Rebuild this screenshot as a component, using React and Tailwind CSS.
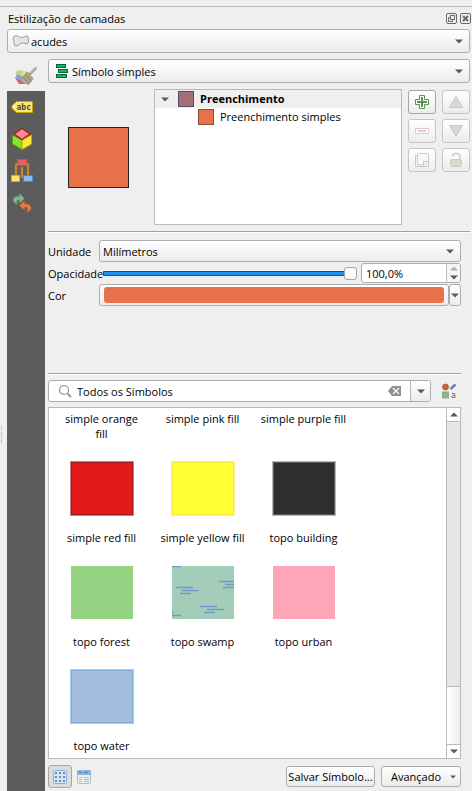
import React from "react";

const UI = "font-['Open_Sans','Noto_Sans',sans-serif]";
const FACE = "border border-[#adadad] rounded-[3px] bg-linear-to-b from-white to-[#ececec]";

function Caret({ up = false, className = "text-[#5a5a5a]" }) {
  return (
    <svg width="8" height="5" viewBox="0 0 8 5" className={`shrink-0 ${className}`} aria-hidden="true">
      <path d={up ? "M0 4.5 L4 0.5 L8 4.5Z" : "M0 0.5 H8 L4 4.5Z"} fill="currentColor" />
    </svg>
  );
}

function Combo({ label, value, icon, id, className, pad }) {
  return (
    <div className={`relative flex-1 min-w-0 ${className}`}>
      <select
        id={id}
        aria-label={label}
        className={`block w-full h-full appearance-none outline-none text-black ${pad} ${FACE}`}
      >
        <option>{value}</option>
      </select>
      <span className="absolute inset-y-0 left-[5px] flex items-center pointer-events-none">{icon}</span>
      <span className="absolute inset-y-0 right-[7px] flex items-center pointer-events-none">
        <Caret />
      </span>
    </div>
  );
}

function PolygonIcon() {
  return (
    <svg width="18" height="14" viewBox="0 0 18 14">
      <path
        d="M2.5 2 C5 0.5 7 3.5 9.5 3.5 C12 3.5 13.5 1.5 15.5 2 C17 4 16.5 8 16 9.5 C14 11 12.5 8.5 10 9 C7.5 9.5 6 12.5 3.5 12 C1.5 11.5 2.5 8.5 1.5 6.5 C1 5 1.5 3 2.5 2Z"
        fill="#e3e3e3"
        stroke="#9a9a9a"
      />
    </svg>
  );
}

function SingleSymbolIcon() {
  return (
    <svg width="16" height="16" viewBox="0 0 16 16">
      <g fill="#0db865" stroke="#07633a">
        <rect x="3.5" y="1.5" width="9" height="3" />
        <rect x="5.5" y="6.5" width="9" height="3" />
        <rect x="3.5" y="11.5" width="10" height="3" />
      </g>
    </svg>
  );
}

function BrushIcon() {
  return (
    <svg width="24" height="20" viewBox="0 0 24 20" className="shrink-0">
      <path d="M4 4 L10 5 L7 10 L1 8Z" fill="#c3d77c" />
      <path d="M10 5 L16 6 L13 11 L7 10Z" fill="#e6da90" />
      <path d="M3 8 L8 10 L6 14 L1 12Z" fill="#78a9e6" />
      <path d="M7 10 L13 11 L12 15 L6 14Z" fill="#8fc9bc" />
      <path d="M1 12 L7 14 L12 18 L5 18Z" fill="#d3607f" />
      <path d="M13 6 L19 12 C18 15 16 17 14 19 L6 12 C9 11 11 9 13 6Z" fill="#aaa58f" stroke="#8f8a76" strokeWidth="0.6" />
      <path d="M9 11.5 L15 17 M11 9.5 L17 14.5" stroke="#827e69" strokeWidth="0.8" />
      <path d="M15.5 8.5 L21.5 2.5" stroke="#a6a18d" strokeWidth="2.6" strokeLinecap="round" />
      <path d="M16 7.5 L21 2.5" stroke="#c8c4b2" strokeWidth="0.8" />
    </svg>
  );
}

function LabelIcon() {
  return (
    <svg width="22" height="12" viewBox="0 0 22 12" className="shrink-0">
      <path d="M5.5 0.5 H21.5 V11.5 H5.5 L1 7.5 V4.5Z" fill="#fbe870" stroke="#c9a300" />
      <circle cx="3.4" cy="6" r="1.1" fill="#fff" />
      <text x="5.5" y="9" fontSize="8" fontWeight="700" fontFamily="DejaVu Sans Mono" fill="#4b4632">abc</text>
    </svg>
  );
}

function CubeIcon() {
  return (
    <svg width="22" height="24" viewBox="0 0 22 24" className="shrink-0">
      <path d="M1.5 8 L11 13 V22.5 L1.5 17Z" fill="#83e62c" stroke="#4ea70c" />
      <path d="M20.5 8 L11 13 V22.5 L20.5 17Z" fill="#ffe73a" stroke="#c8a800" />
      <path d="M11 1.5 L19 7 L11 12.5 L3 7Z" fill="#f78d8d" stroke="#bc1420" strokeWidth="1.3" />
    </svg>
  );
}

function DiagramIcon() {
  return (
    <svg width="22" height="24" viewBox="0 0 22 24" className="shrink-0">
      <path d="M5 17 V5 H17 V17 M11 8 V19" fill="none" stroke="#a66e16" strokeWidth="2.6" />
      <path d="M5 17 V5 H17 V17 M11 8 V19" fill="none" stroke="#dda046" />
      <rect x="6.5" y="0.5" width="9" height="6" fill="#ee5f64" stroke="#cf4c51" />
      <rect x="0.5" y="16.5" width="8" height="6" fill="#fce565" stroke="#cdae29" />
      <rect x="12.5" y="16.5" width="9" height="6" fill="#8dbaf0" stroke="#5585bd" />
    </svg>
  );
}

function HistoryIcon() {
  return (
    <svg width="20" height="20" viewBox="0 0 20 20" className="shrink-0">
      <path d="M5.5 11.5 C-1 9 0 2.5 7.5 3.5 V0.5 L12.5 5.5 L7.5 10 V7 C4.5 6.5 4 8.5 5.5 11.5Z" fill="#7fb592" stroke="#66997a" strokeWidth="0.7" />
      <path d="M14 19.5 C21.5 17.5 20.5 10.5 12.5 11 V8 L7.5 12.5 L12.5 17 V14 C16 13.5 16.5 16.5 14 19.5Z" fill="#e37e43" stroke="#bd632e" strokeWidth="0.7" />
    </svg>
  );
}

function AddIcon() {
  return (
    <svg width="16" height="16" viewBox="0 0 16 16">
      <path d="M5.5 1.5 H10.5 V5.5 H14.5 V10.5 H10.5 V14.5 H5.5 V10.5 H1.5 V5.5 H5.5Z" fill="#fff" stroke="#5c9158" />
      <path d="M8 3 V13 M3 8 H13" stroke="#5c9158" strokeWidth="2" />
    </svg>
  );
}

function RemoveIcon() {
  return (
    <svg width="16" height="16" viewBox="0 0 16 16">
      <rect x="1.5" y="5.5" width="13" height="5" fill="#fff" stroke="#e3cdcb" />
      <rect x="4" y="7" width="8" height="2" fill="#e3cdcb" />
    </svg>
  );
}

function TriangleIcon({ down = false }) {
  return (
    <svg width="16" height="16" viewBox="0 0 16 16">
      <path d={down ? "M1.5 2.5 H14.5 L8 13.5Z" : "M1.5 13.5 H14.5 L8 2.5Z"} fill="#d6d8db" stroke="#c3c6ca" />
    </svg>
  );
}

function DuplicateIcon() {
  return (
    <svg width="16" height="16" viewBox="0 0 16 16">
      <path d="M3 3.5 H1.5 V14.5 H10" fill="none" stroke="#c9c9c9" />
      <path d="M3.5 1.5 H14.5 V12.5 H3.5Z" fill="#f8f8f8" stroke="#cfcfcf" />
      <rect x="9.5" y="9.5" width="5" height="5" fill="#eeede2" stroke="#cfcdbb" />
    </svg>
  );
}

function LockIcon() {
  return (
    <svg width="16" height="16" viewBox="0 0 16 16">
      <path d="M4.5 4.5 C5 0.5 12 0.5 12 5 V7" fill="none" stroke="#d6d6d6" strokeWidth="2" />
      <rect x="2.5" y="7.5" width="11" height="7" rx="1" fill="#dad8cb" stroke="#cfccbc" />
    </svg>
  );
}

function ToolButton({ label, disabled, children }) {
  return (
    <button
      type="button"
      aria-label={label}
      disabled={disabled}
      className={`w-7 h-6 flex items-center justify-center rounded-[3px] border bg-linear-to-b from-white to-[#ececec] ${
        disabled ? "border-[#c6c6c6]" : "border-[#a6a6a6]"
      }`}
    >
      {children}
    </button>
  );
}

function Divider() {
  return <div className="h-[2px] border-t border-[#a0a0a0] bg-white" />;
}

function Swamp() {
  return (
    <svg width="62" height="53" viewBox="0 0 62 53" className="m-px">
      <rect width="62" height="53" fill="#a4cdb9" />
      <path
        d="M0 .5 H9 M4 21.5 H21 M10 24.5 H27 M8 27.5 H19 M47 15.5 H62 M53 18.5 H62 M51 21.5 H62 M28 40.5 H45 M35 43.5 H52 M32 46.5 H43 M0 46.5 H2 M0 49.5 H9"
        stroke="#6d9bd0"
        strokeWidth="1.3"
      />
    </svg>
  );
}

const symbols = [
  { name: "simple red fill", swatch: "bg-[#e31a1c] border border-[#c28485] inset-ring inset-ring-[#a81a1c]" },
  { name: "simple yellow fill", swatch: "bg-[#ffff33] border border-[#fbf0a0] inset-ring inset-ring-[#fbea3c]" },
  { name: "topo building", swatch: "bg-[#2f2f2f] border border-[#b9b9b9] inset-ring inset-ring-[#5c5c5c]" },
  { name: "topo forest", swatch: "bg-[#95d282] border border-white" },
  { name: "topo swamp", art: <Swamp /> },
  { name: "topo urban", swatch: "bg-[#ffa5b8] border border-white" },
  { name: "topo water", swatch: "bg-[#a6bedd] border border-[#b0cbe8] inset-ring inset-ring-[#82add9]" },
];

export default function App() {
  return (
    <div className={`min-h-screen flex flex-col bg-[#efefef] pt-[6px] text-[11px] leading-[15px] text-black ${UI}`}>
      <div className="flex-1 flex border-t border-[#b9b9b9]">
        <div className="w-[7px] shrink-0 pt-[419px]">
          <div className="ml-px w-px h-[17px] border-l border-dotted border-[#a8a8a8]" />
        </div>
        <div className="flex-1 min-w-0 flex flex-col">
          <header className="h-[22px] flex items-center justify-between pl-px pr-px">
            <h1>Estilização de camadas</h1>
            <div className="flex gap-[3px]">
              <button type="button" aria-label="Destacar painel">
                <svg width="11" height="11" viewBox="0 0 11 11" fill="none" stroke="#6b6b6b">
                  <rect x=".5" y=".5" width="10" height="10" rx="1.5" />
                  <rect x="4.5" y="2.5" width="4" height="4" />
                  <path d="M4.5 4.5 H2.5 V8.5 H6.5 V6.5" />
                </svg>
              </button>
              <button type="button" aria-label="Fechar painel">
                <svg width="11" height="11" viewBox="0 0 11 11" fill="none" stroke="#6b6b6b">
                  <rect x=".5" y=".5" width="10" height="10" rx="1.5" />
                  <path d="M3 3 L8 8 M8 3 L3 8" strokeWidth="2" />
                </svg>
              </button>
            </div>
          </header>

          <div className="flex pr-[2px]">
            <Combo label="Camada" value="acudes" icon={<PolygonIcon />} className="h-6" pad="pl-[23px]" />
          </div>

          <div className="flex-1 flex">
            <nav className="w-[38px] shrink-0 flex flex-col">
              <button type="button" aria-label="Simbologia" className="h-[38px] pt-2 flex items-center justify-center">
                <BrushIcon />
              </button>
              <div className="flex-1 bg-[#5c5c5c] flex flex-col">
                <button type="button" aria-label="Rótulos" className="h-8 pr-2 flex items-center justify-center"><LabelIcon /></button>
                <button type="button" aria-label="Visualização 3D" className="h-8 pr-2 flex items-center justify-center"><CubeIcon /></button>
                <button type="button" aria-label="Diagramas" className="h-8 pr-2 flex items-center justify-center"><DiagramIcon /></button>
                <button type="button" aria-label="Histórico" className="h-8 pr-2 flex items-center justify-center"><HistoryIcon /></button>
              </div>
            </nav>

            <main className="flex-1 min-w-0 flex flex-col pl-[3px] pt-[6px]">
              <div className="pr-[2px]">
                <div className="flex">
                  <Combo label="Renderizador" value="Símbolo simples" icon={<SingleSymbolIcon />} className="h-6" pad="pl-[23px]" />
                </div>
                <div className="mt-[6px] flex">
                  <div className="w-[106px] shrink-0 flex items-center pl-5">
                    <div className="w-[61px] h-[61px] bg-[#e77148] border border-[#232323]" />
                  </div>
                  <ul className="flex-1 min-w-0 h-[136px] border border-[#b9b9b9] bg-white leading-[18px]">
                    <li>
                      <div className="h-[18px] flex items-center bg-[#efefef] pl-[6px] font-bold">
                        <Caret />
                        <span className="ml-[9px] mr-[6px] size-4 bg-[#a27074] border border-[#5a4a66]" />
                        Preenchimento
                      </div>
                      <ul>
                        <li className="h-[18px] flex items-center pl-[43px]">
                          <span className="mr-[6px] size-4 bg-[#e77148] border border-[#8a4a3c]" />
                          Preenchimento simples
                        </li>
                      </ul>
                    </li>
                  </ul>
                  <div className="ml-[6px] mt-px grid grid-cols-2 gap-x-[6px] gap-y-[5px] content-start">
                    <ToolButton label="Adicionar camada de símbolo"><AddIcon /></ToolButton>
                    <ToolButton label="Mover para cima" disabled><TriangleIcon /></ToolButton>
                    <ToolButton label="Remover camada de símbolo" disabled><RemoveIcon /></ToolButton>
                    <ToolButton label="Mover para baixo" disabled><TriangleIcon down /></ToolButton>
                    <ToolButton label="Duplicar" disabled><DuplicateIcon /></ToolButton>
                    <ToolButton label="Bloquear cor" disabled><LockIcon /></ToolButton>
                  </div>
                </div>
                <div className="mt-[6px]"><Divider /></div>
              </div>

              <div className="flex-1 flex flex-col pr-[11px] pt-[7px]">
                <div className="flex flex-col gap-px">
                  <div className="flex items-center">
                    <label htmlFor="unit" className="w-[51px] shrink-0">Unidade</label>
                    <Combo id="unit" value="Milímetros" className="h-[22px]" pad="pl-[3px]" />
                  </div>
                  <div className="flex items-center h-5">
                    <label htmlFor="opacity" className="shrink-0 whitespace-nowrap">Opacidade</label>
                    <input
                      id="opacity"
                      type="range"
                      defaultValue="100"
                      className="flex-1 min-w-0 h-[13px] mr-1 appearance-none bg-transparent [&::-webkit-slider-runnable-track]:h-[5px] [&::-webkit-slider-runnable-track]:rounded-[1px] [&::-webkit-slider-runnable-track]:shadow-[inset_0_0_0_1px_#0e5596] [&::-webkit-slider-runnable-track]:bg-[#1e90f0] [&::-webkit-slider-thumb]:appearance-none [&::-webkit-slider-thumb]:size-[13px] [&::-webkit-slider-thumb]:-mt-1 [&::-webkit-slider-thumb]:rounded-[3px] [&::-webkit-slider-thumb]:border [&::-webkit-slider-thumb]:border-[#a6a6a6] [&::-webkit-slider-thumb]:bg-[#fafafa]"
                    />
                    <div className="w-[100px] h-5 flex rounded-[3px] border border-[#adadad] bg-white overflow-hidden">
                      <input aria-label="Valor da opacidade" defaultValue="100,0%" className="flex-1 min-w-0 pl-1 outline-none" />
                      <div className="w-[14px] flex flex-col border-l border-[#c0c0c0] bg-[#f6f6f6]">
                        <button type="button" aria-label="Aumentar" className="flex-1 flex items-center justify-center"><Caret up className="text-[#b0b0b0]" /></button>
                        <button type="button" aria-label="Diminuir" className="flex-1 flex items-center justify-center"><Caret /></button>
                      </div>
                    </div>
                  </div>
                  <div className="flex items-center">
                    <label htmlFor="color" className="w-[51px] shrink-0">Cor</label>
                    <button id="color" type="button" className={`flex-1 h-[22px] flex py-[2px] px-1 ${FACE}`}>
                      <span className="flex-1 h-4 rounded-[3px] bg-[#e77148]" />
                    </button>
                    <button type="button" aria-label="Opções de cor" className={`w-3 h-[22px] flex items-center justify-center ${FACE}`}>
                      <Caret />
                    </button>
                  </div>
                </div>

                <div className="mt-[67px]"><Divider /></div>

                <div className="mt-[5px] flex items-center">
                  <div className="flex-1 min-w-0 h-[22px] flex items-center rounded-[3px] border border-[#adadad] bg-white overflow-hidden">
                    <svg width="14" height="14" viewBox="0 0 14 14" className="ml-[9px] shrink-0" fill="none" stroke="#8f8f8f">
                      <circle cx="6" cy="6" r="4.5" strokeWidth="1.2" />
                      <path d="M9.3 9.3 L13 13" strokeWidth="1.8" />
                    </svg>
                    <input aria-label="Filtrar símbolos" defaultValue="Todos os Símbolos" className="flex-1 min-w-0 ml-[5px] outline-none" />
                    <button type="button" aria-label="Limpar" className="mr-[9px]">
                      <svg width="13" height="10" viewBox="0 0 13 10">
                        <path d="M4 0 H13 V10 H4 L0 5Z" fill="#8f8f8f" />
                        <path d="M5 2 L11 8 M11 2 L5 8" stroke="#fff" strokeWidth="1.2" />
                      </svg>
                    </button>
                    <button type="button" aria-label="Abrir lista" className="w-5 h-full border-l border-[#b9b9b9] bg-linear-to-b from-white to-[#ececec] flex items-center justify-center">
                      <Caret />
                    </button>
                  </div>
                  <button type="button" aria-label="Gerenciador de estilos" className="w-[30px] pl-[10px]">
                    <svg width="16" height="16" viewBox="0 0 16 16">
                      <circle cx="4.5" cy="4" r="3" fill="#cf6536" stroke="#a84a20" strokeWidth=".7" />
                      <path d="M9.5 6 L14.5 1.5" stroke="#5c82b5" strokeWidth="2.4" />
                      <rect x="1.5" y="9" width="6" height="6" fill="#8bb58f" stroke="#729d76" strokeWidth=".7" />
                      <text x="10" y="14.5" fontSize="8" fontFamily="DejaVu Sans" fill="#5a5a5a">a</text>
                    </svg>
                  </button>
                </div>

                <div className="mt-[5px] flex-1 flex border border-[#b9b9b9] bg-white">
                  <div className="flex-1 min-w-0 pl-[2px] pt-[3px] text-center">
                    <ul className="grid grid-cols-[repeat(auto-fill,101px)] gap-y-5">
                      <li>simple orange<br />fill</li>
                      <li>simple pink fill</li>
                      <li>simple purple fill</li>
                      {symbols.map((s) => (
                        <li key={s.name} className="flex flex-col items-center whitespace-nowrap">
                          <span className={`w-16 h-[55px] mb-[14px] ${s.swatch || ""}`}>{s.art}</span>
                          {s.name}
                        </li>
                      ))}
                    </ul>
                  </div>
                  <div className="w-[14px] flex flex-col border-l border-[#b9b9b9] bg-[#e6e6e6]">
                    <button type="button" aria-label="Rolar para cima" className="h-[14px] flex items-center justify-center bg-white border-b border-[#b9b9b9]"><Caret up /></button>
                    <div className="flex-1" />
                    <div className="h-[58px] border-t border-[#b9b9b9] bg-linear-to-r from-white to-[#eeeeee]" />
                    <button type="button" aria-label="Rolar para baixo" className="h-[14px] flex items-center justify-center bg-white border-t border-[#b9b9b9]"><Caret /></button>
                  </div>
                </div>

                <footer className="mt-[6px] mb-[3px] h-[23px] flex items-center">
                  <button type="button" aria-label="Exibição em ícones" className="w-6 h-[23px] flex items-center justify-center rounded-[3px] border border-[#a6a6a6] bg-[#dcdcdc]">
                    <svg width="14" height="14" viewBox="0 0 14 14">
                      <rect x=".5" y=".5" width="13" height="13" rx="1" fill="#d5e3f2" stroke="#8fb0d5" />
                      <path d="M2 3 H12 M2 7 H12 M2 11 H12" stroke="#5f8fc4" strokeWidth="2" strokeDasharray="2 2" />
                    </svg>
                  </button>
                  <button type="button" aria-label="Exibição em lista" className="w-6 h-[23px] flex items-center justify-center">
                    <svg width="14" height="14" viewBox="0 0 14 14">
                      <rect x=".5" y=".5" width="13" height="13" rx="1" fill="#f0f0ee" stroke="#a9c1dc" />
                      <rect x="0" y="0" width="14" height="5" rx="1" fill="#8fb4dc" />
                      <path d="M2 2.5 H5 M7 2.5 H11" stroke="#4f7fb5" />
                      <path d="M2 7.5 H5 M7 7.5 H12 M2 9.5 H5 M7 9.5 H12 M2 11.5 H5 M7 11.5 H12" stroke="#b4bcc4" />
                    </svg>
                  </button>
                  <button type="button" className={`ml-auto w-[89px] h-[21px] flex items-center justify-center whitespace-nowrap ${FACE}`}>
                    Salvar Símbolo...
                  </button>
                  <button type="button" className={`ml-[6px] w-20 h-[21px] flex items-center justify-between pl-[9px] pr-1 ${FACE}`}>
                    Avançado
                    <svg width="6" height="4" viewBox="0 0 6 4"><path d="M0 .5 H6 L3 3.5Z" fill="#5a5a5a" /></svg>
                  </button>
                </footer>
              </div>
            </main>
          </div>
        </div>
      </div>
    </div>
  );
}
